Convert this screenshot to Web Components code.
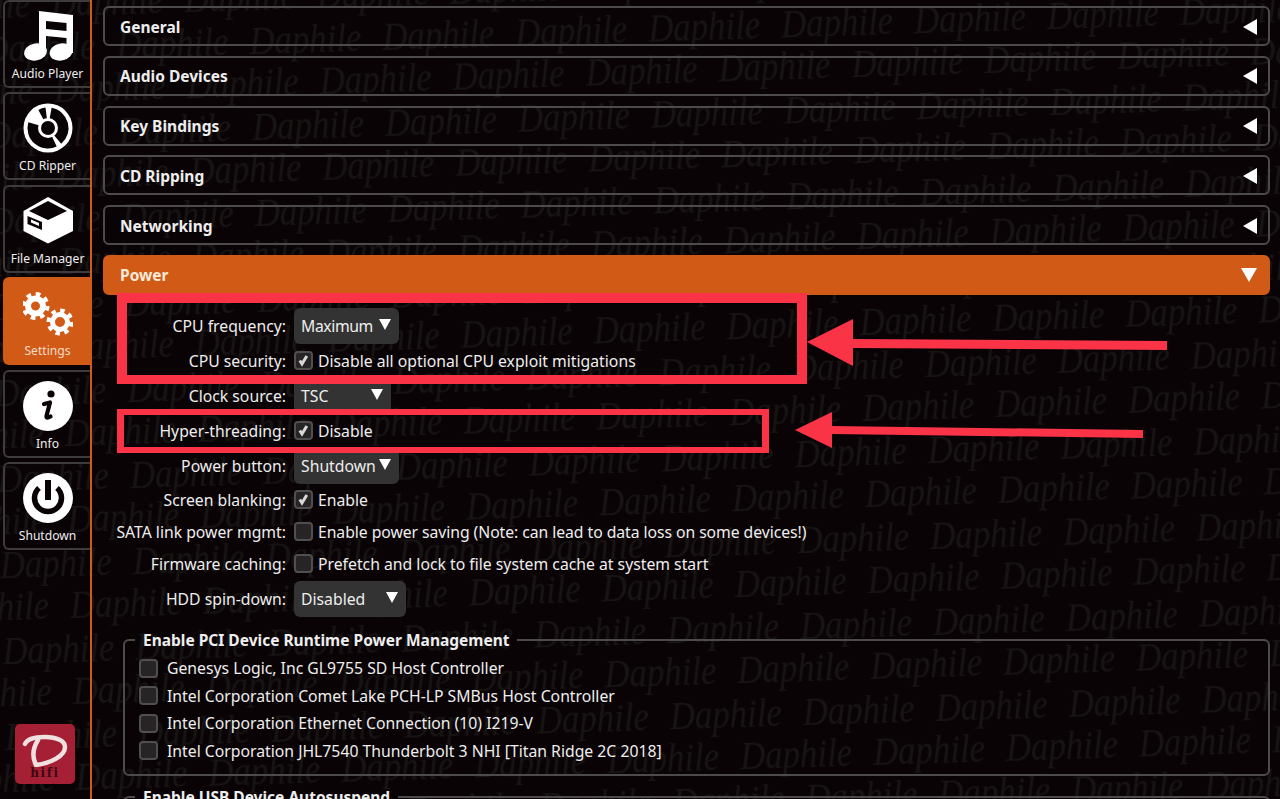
<!DOCTYPE html>
<html>
<head>
<meta charset="utf-8">
<title>Daphile Settings</title>
<style>
  html, body { margin: 0; height: 100%; overflow: hidden; background: #0a0305; }
  body { font-family: "Noto Sans", "Open Sans", sans-serif; color: #eee; font-size: 15.75px; }
  dp-app { height: 799px; }
</style>
</head>
<body>
<dp-app>
  <dp-wallpaper></dp-wallpaper>
  <dp-sidebar slot="nav">
    <dp-tab label="Audio Player"><svg viewBox="0 0 50 50" width="50" height="50"><g fill="#fff"><path fill-rule="evenodd" d="M16 0 L50 4 V42 H43.5 V27 L23 25 V42 H16Z M23 10 L43.5 12 V20 L23 18Z"/><ellipse cx="12.5" cy="41" rx="11.5" ry="8.5" transform="rotate(-12 12.5 41)"/><ellipse cx="38" cy="41" rx="11.5" ry="8.5" transform="rotate(-12 38 41)"/></g></svg></dp-tab>
    <dp-tab label="CD Ripper"><svg viewBox="0 0 50 50" width="50" height="50"><circle cx="25" cy="25" r="24.5" fill="#fff"/><g fill="#0a0305"><path d="M25 25 L15.4 6.9 A20.5 20.5 0 0 1 22.5 4.6Z"/><path d="M25 25 L28.6 4.8 A20.5 20.5 0 0 1 38.2 40.7Z"/><path d="M25 25 L33.7 43.6 A20.5 20.5 0 0 1 5.3 19.3Z"/></g><circle cx="25" cy="25" r="10" fill="#fff"/><circle cx="25" cy="25" r="7" fill="#0a0305"/></svg></dp-tab>
    <dp-tab label="File Manager"><svg viewBox="0 0 50 50" width="50" height="50"><path d="M25 1 L50 15 V35 L25 47.5 L0.5 35 V15Z" fill="#fff"/><path d="M25 5 L44 15 L25 24 L6 15Z" fill="#0a0305"/><path d="M4.5 20 L19 26 V34 L4.5 28Z" fill="#0a0305"/><path d="M8 23.5 L16 27 V30 L8 26.5Z" fill="#fff"/></svg></dp-tab>
    <dp-tab label="Settings" active><svg viewBox="0 0 50 50" width="50" height="50" fill="none" stroke="#fff"><circle cx="12.5" cy="18" r="7.5" stroke-width="6"/><circle cx="12.5" cy="18" r="12" stroke-width="4" stroke-dasharray="4.7 4.7"/><circle cx="37" cy="34" r="7.5" stroke-width="5"/><circle cx="37" cy="34" r="11.5" stroke-width="4" stroke-dasharray="4.5 4.5"/></svg></dp-tab>
    <dp-tab label="Info"><svg viewBox="0 0 50 50" width="50" height="50"><circle cx="25" cy="25" r="25" fill="#fff"/><circle cx="28" cy="13" r="3.6" fill="#0a0305"/><path d="M21 23 L27 21.5 L23.5 35 Q23 38 27.5 35.5" fill="none" stroke="#0a0305" stroke-width="4.2" stroke-linejoin="round" stroke-linecap="round"/></svg></dp-tab>
    <dp-tab label="Shutdown"><svg viewBox="0 0 50 50" width="50" height="50"><circle cx="25" cy="25" r="25" fill="#fff"/><path d="M16 15 A13.5 13.5 0 1 0 34 15" fill="none" stroke="#0a0305" stroke-width="5.5"/><rect x="22" y="7" width="6" height="20" fill="#0a0305"/></svg></dp-tab>
    <dp-logo></dp-logo>
  </dp-sidebar>
  <dp-panel>
    <dp-accordion>General</dp-accordion>
    <dp-accordion>Audio Devices</dp-accordion>
    <dp-accordion>Key Bindings</dp-accordion>
    <dp-accordion>CD Ripping</dp-accordion>
    <dp-accordion>Networking</dp-accordion>
    <dp-accordion open>Power</dp-accordion>
    <dp-form>
      <dp-row label="CPU frequency:"><dp-select width="105" style="letter-spacing:-.4px">Maximum</dp-select></dp-row>
      <dp-row label="CPU security:"><dp-check checked>Disable all optional CPU exploit mitigations</dp-check></dp-row>
      <dp-row label="Clock source:"><dp-select width="97">TSC</dp-select></dp-row>
      <dp-row label="Hyper-threading:"><dp-check checked>Disable</dp-check></dp-row>
      <dp-row label="Power button:"><dp-select width="105">Shutdown</dp-select></dp-row>
      <dp-row label="Screen blanking:" height="32.5"><dp-check checked>Enable</dp-check></dp-row>
      <dp-row label="SATA link power mgmt:" height="32"><dp-check style="letter-spacing:-.06px">Enable power saving (Note: can lead to data loss on some devices!)</dp-check></dp-row>
      <dp-row label="Firmware caching:" height="32"><dp-check>Prefetch and lock to file system cache at system start</dp-check></dp-row>
      <dp-row label="HDD spin-down:" height="38"><dp-select width="112">Disabled</dp-select></dp-row>
    </dp-form>
    <dp-group legend="Enable PCI Device Runtime Power Management">
      <dp-check>Genesys Logic, Inc GL9755 SD Host Controller</dp-check>
      <dp-check>Intel Corporation Comet Lake PCH-LP SMBus Host Controller</dp-check>
      <dp-check>Intel Corporation Ethernet Connection (10) I219-V</dp-check>
      <dp-check>Intel Corporation JHL7540 Thunderbolt 3 NHI [Titan Ridge 2C 2018]</dp-check>
    </dp-group>
    <dp-group legend="Enable USB Device Autosuspend"></dp-group>
  </dp-panel>
  <dp-annotations></dp-annotations>
</dp-app>

<script>
// small helper, every element below is just markup + styles in an open shadow root
function defineEl(name, css, html, setup) {
  customElements.define(name, class extends HTMLElement {
    constructor() {
      super();
      this.attachShadow({ mode: 'open' });
    }
    connectedCallback() {
      this.shadowRoot.innerHTML = `<style>${css}</style>${typeof html === 'function' ? html(this) : html}`;
      if (setup) setup(this);
    }
  });
}

// --- Page shell ---
defineEl('dp-app',
  `:host { display: flex; position: relative; overflow: hidden; }`,
  `<slot name="nav"></slot><slot></slot>`);

defineEl('dp-wallpaper',
  `:host { position: absolute; inset: 0; z-index: 0; display: block; }
   svg { display: block; }
   text { font: italic 400 40px "Liberation Serif", serif; fill: #171414; }`,
  `<svg width="1280" height="799">
    <defs>
      <text id="word" textLength="112" lengthAdjust="spacingAndGlyphs">Daphile</text>
      <pattern id="tile" width="133" height="86" patternUnits="userSpaceOnUse" patternTransform="rotate(-1.8)">
        <rect width="133" height="86" fill="#0a0305"/>
        <use href="#word" x="51" y="18"/><use href="#word" x="-82" y="18"/>
        <use href="#word" x="51" y="104"/><use href="#word" x="-82" y="104"/>
        <use href="#word" x="115" y="62"/><use href="#word" x="-18" y="62"/>
      </pattern>
    </defs>
    <rect width="1280" height="799" fill="url(#tile)"/>
  </svg>`);

// --- Sidebar ---
defineEl('dp-sidebar',
  `:host { position: relative; z-index: 1; flex: none; width: 90px; height: 799px; padding-left: 3px; box-sizing: border-box;
     border-right: 0; display: flex; flex-direction: column; gap: 4.4px; }
   :host::after { content: ""; position: absolute; left: 90px; top: 0; bottom: 0; width: 2px; background: #d05a16; }`,
  `<slot></slot>`);

defineEl('dp-tab',
  `:host { display: flex; flex-direction: column; align-items: center; height: 88px; box-sizing: border-box; flex: none;
     padding-top: 10px; border: 2px solid #3d3b3b; border-right: 0; border-radius: 6px 0 0 6px; font-size: 12.1px; color: #eee; }
   :host([active]) { background: #d05a16; border-color: #d05a16; color: #f6dcc6; }
   .icon { height: 50px; width: 50px; margin-right: -1px; margin-top: -1px; }
   svg { display: block; }
   .label { margin-top: 5px; line-height: 16px; white-space: nowrap; }`,
  el => `<div class="icon"><slot></slot></div><div class="label">${el.getAttribute('label')}</div>`);

defineEl('dp-logo',
  `:host { position: absolute; left: 15px; top: 724px; width: 60px; height: 60px; background: #a52035; border-radius: 5px;
     display: flex; flex-direction: column; align-items: center; }
   svg { display: block; }
   .hifi { font: 700 12px/12px "DejaVu Serif", "Liberation Serif", serif; color: #3a0810; letter-spacing: 1.6px; }`,
  `<svg width="60" height="43" viewBox="0 0 60 43"><path d="M10 20 C12 15 20 13 30 13 C42 13 50 17 50 23 C50 32 36 39 21 41 C17 33 18 24 23 16" fill="none" stroke="#f0e0e0" stroke-width="4.5" stroke-linecap="round"/></svg><div class="hifi">hifi</div>`);

// --- Main panel ---
defineEl('dp-panel',
  `:host { position: relative; z-index: 1; flex: 1; min-width: 0; padding: 6px 10px 0 13px; display: flex; flex-direction: column; }`,
  `<slot></slot>`);

defineEl('dp-accordion',
  `:host { display: flex; align-items: center; justify-content: space-between; flex: none; height: 40px; box-sizing: border-box;
     margin-bottom: 9.8px; padding: 1px 11px 0 15px; border: 2px solid #4c4a4a; border-radius: 6px;
     font-weight: 700; font-size: 15.5px; color: #eee; }
   :host([open]) { background: #d05a16; border-color: #d05a16; color: #fbe9d9; margin-bottom: 0; }
   svg { display: block; }`,
  el => `<slot></slot>${el.hasAttribute('open')
    ? '<svg width="16" height="14"><path d="M0 0H16L8 14Z" fill="#fff"/></svg>'
    : '<svg width="14" height="16"><path d="M0 8L14 0V16Z" fill="#fff"/></svg>'}`);

defineEl('dp-form',
  `:host { display: block; padding-top: 13.5px; }`,
  `<slot></slot>`);

defineEl('dp-row',
  `:host { display: flex; align-items: center; gap: 8px; white-space: nowrap; }
   .label { flex: none; width: 183px; text-align: right; }`,
  el => `<div class="label">${el.getAttribute('label')}</div><slot></slot>`,
  el => { el.style.height = (el.getAttribute('height') || 35) + 'px'; });

defineEl('dp-select',
  `:host { display: flex; align-items: center; justify-content: space-between; height: 36px; box-sizing: border-box;
     padding: 0 8px 0 7px; background: #333; border-radius: 6px; flex: none; }
   svg { display: block; margin-top: -3px; }`,
  `<slot></slot><svg width="12" height="11"><path d="M0 0H12L6 11Z" fill="#fff"/></svg>`,
  el => { el.style.width = el.getAttribute('width') + 'px'; });

defineEl('dp-check',
  `:host { display: flex; align-items: center; gap: 5px; white-space: nowrap; }
   .box { flex: none; width: 19px; height: 19px; border: 2px solid #504e4e; border-radius: 4px; background: #262424; box-sizing: border-box;
     display: flex; align-items: center; justify-content: center; }
   svg { display: block; }`,
  el => `<div class="box">${el.hasAttribute('checked')
    ? '<svg width="13" height="13" viewBox="0 0 13 13"><path d="M2.8 6.5 L5 10 L9.8 2" fill="none" stroke="#d8d8d8" stroke-width="3"/></svg>' : ''}</div><slot></slot>`);

defineEl('dp-group',
  `:host { display: block; flex: none; margin-left: 20px; }
   fieldset { margin: 0; padding: 4.5px 0 10px 14px; border: 2px solid #4c4a4a; border-radius: 6px; min-height: 60px; box-sizing: border-box; }
   legend { padding: 0 8px; margin-left: -4px; font-weight: 700; font-size: 15.5px; line-height: 20px; }
   ::slotted(dp-check) { height: 27.5px; gap: 9px; }`,
  el => `<fieldset><legend>${el.getAttribute('legend')}</legend><slot></slot></fieldset>`,
  el => { el.style.marginTop = el.previousElementSibling.tagName === 'DP-GROUP' ? '11px' : '12px'; });

// --- Red markup drawn over the screenshot ---
defineEl('dp-annotations',
  `:host { position: absolute; inset: 0; z-index: 2; pointer-events: none; display: block; }
   svg { display: block; }`,
  `<svg width="1280" height="799" fill="#fb3346">
    <path fill-rule="evenodd" d="M117 293H807V384H117Z M127 303V375H797V303Z"/>
    <path fill-rule="evenodd" d="M117 409H769V453H117Z M124 415V447H762V415Z"/>
    <path d="M807 342 L853 319 V339 L1167 341 V350 L853 348 V366Z"/>
    <path d="M795 430 L832 412 V426 L1143 430 V438 L832 434 V448Z"/>
  </svg>`);
</script>
</body>
</html>
